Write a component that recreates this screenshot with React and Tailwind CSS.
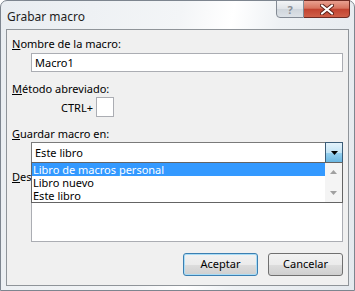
export default function App() {
  return (
    <div className="w-[355px] h-[291px] overflow-hidden bg-white">
      <div className="relative w-[355px] h-[291px] rounded-t-[7px] border border-[#7d858f] bg-[linear-gradient(100deg,#e9edf1_0%,#f3f5f7_45%,#ffffff_58%,#eef1f4_70%,#e4e9ee_100%)] font-['Noto_Sans',sans-serif] text-[11px] text-black">
        {/* title bar */}
        <div className="flex h-[28px] items-start justify-between">
          <div className="pl-[6px] pt-[9px] text-[12px] leading-[14px] text-[#1e1e1e]">Grabar macro</div>
          <div className="flex pr-[4px] -mt-px">
            <div className="flex h-[18px] w-[28px] items-center justify-center rounded-bl-[4px] border border-[#838a94] bg-[linear-gradient(#f2f4f6,#dfe3e8_50%,#cfd5dc_51%,#dde2e7)] text-[11px] font-bold leading-none text-[#8a8f96]">
              ?
            </div>
            <div className="flex h-[18px] w-[46px] items-center justify-center rounded-br-[4px] border border-l-0 border-[#6f2a22] bg-[linear-gradient(#e9a090,#d8745f_45%,#c24330_52%,#cf5f48)]">
              <svg width="14" height="11" viewBox="0 0 14 11">
                <path d="M2 1.5 L12 9.5 M12 1.5 L2 9.5" stroke="#5a2018" strokeWidth="4" strokeLinecap="round" />
                <path d="M2 1.5 L12 9.5 M12 1.5 L2 9.5" stroke="#ffffff" strokeWidth="2.2" strokeLinecap="round" />
              </svg>
            </div>
          </div>
        </div>
        {/* content panel */}
        <div className="relative mx-[5px] h-[257px] border border-[#8f9499] bg-[#f0f0f0]">
          <div className="flex flex-col pl-[5px] pr-[5px] pt-[6px]">
            <div className="h-[15px] leading-[15px]"><span className="underline">N</span>ombre de la macro:</div>
            <div className="mt-[2px] ml-[19px] flex h-[19px] items-center border border-[#abadb3] bg-white pl-[3px] leading-[15px]">Macro1</div>
            <div className="mt-[9px] h-[15px] leading-[15px]"><span className="underline">M</span>étodo abreviado:</div>
            <div className="mt-px flex h-[20px] items-center">
              <span className="ml-[49px] leading-[15px]">CTRL+</span>
              <div className="ml-[3px] h-[20px] w-[18px] border border-[#abadb3] bg-white"></div>
            </div>
            <div className="mt-[9px] h-[15px] leading-[15px]"><span className="underline">G</span>uardar macro en:</div>
            <div className="mt-px ml-[19px] flex h-[21px] items-center border border-[#7a7a7a] bg-white">
              <span className="flex-1 pl-[3px] leading-[15px]">Este libro</span>
              <div className="flex h-[21px] w-[18px] -mr-px -my-px items-center justify-center border border-[#3c5d78] bg-[linear-gradient(#e4f3fb,#c4e5f6_50%,#98d1ef_51%,#6ab7e2)]">
                <svg width="7" height="4" viewBox="0 0 7 4"><path d="M0 0 H7 L3.5 4 Z" fill="#000" /></svg>
              </div>
            </div>
            <div className="mt-[6px] h-[15px] w-[19px] overflow-hidden whitespace-nowrap leading-[15px]"><span className="underline">D</span>escripción:</div>
            <div className="mt-[1px] ml-[19px] h-[57px] border border-[#abadb3] bg-white"></div>
            <div className="mt-[11px] flex justify-end gap-[10px]">
              <div className="flex h-[23px] w-[75px] items-center justify-center rounded-[3px] border border-[#3c7fb1] bg-[linear-gradient(#f2f2f2,#ebebeb_50%,#dddddd_51%,#cfcfcf)] shadow-[inset_0_0_0_1px_#a9dcf6]">Aceptar</div>
              <div className="flex h-[23px] w-[75px] items-center justify-center rounded-[3px] border border-[#707070] bg-[linear-gradient(#f2f2f2,#ebebeb_50%,#dddddd_51%,#cfcfcf)]">Cancelar</div>
            </div>
          </div>
          {/* dropdown list overlay */}
          <div className="absolute left-[24px] top-[132px] flex h-[41px] w-[312px] border border-[#646464] bg-white">
            <div className="flex flex-1 flex-col leading-[13px]">
              <div className="h-[13px] bg-[#3399ff] pl-[1px] text-white">Libro de macros personal</div>
              <div className="h-[13px] pl-[1px]">Libro nuevo</div>
              <div className="h-[13px] pl-[1px]">Este libro</div>
            </div>
            <div className="flex w-[17px] flex-col items-center justify-between bg-[#f4f4f4] py-[7px]">
              <svg width="7" height="4" viewBox="0 0 7 4"><path d="M0 4 H7 L3.5 0 Z" fill="#a0a0a0" /></svg>
              <svg width="7" height="4" viewBox="0 0 7 4"><path d="M0 0 H7 L3.5 4 Z" fill="#a0a0a0" /></svg>
            </div>
          </div>
        </div>
      </div>
    </div>
  );
}
